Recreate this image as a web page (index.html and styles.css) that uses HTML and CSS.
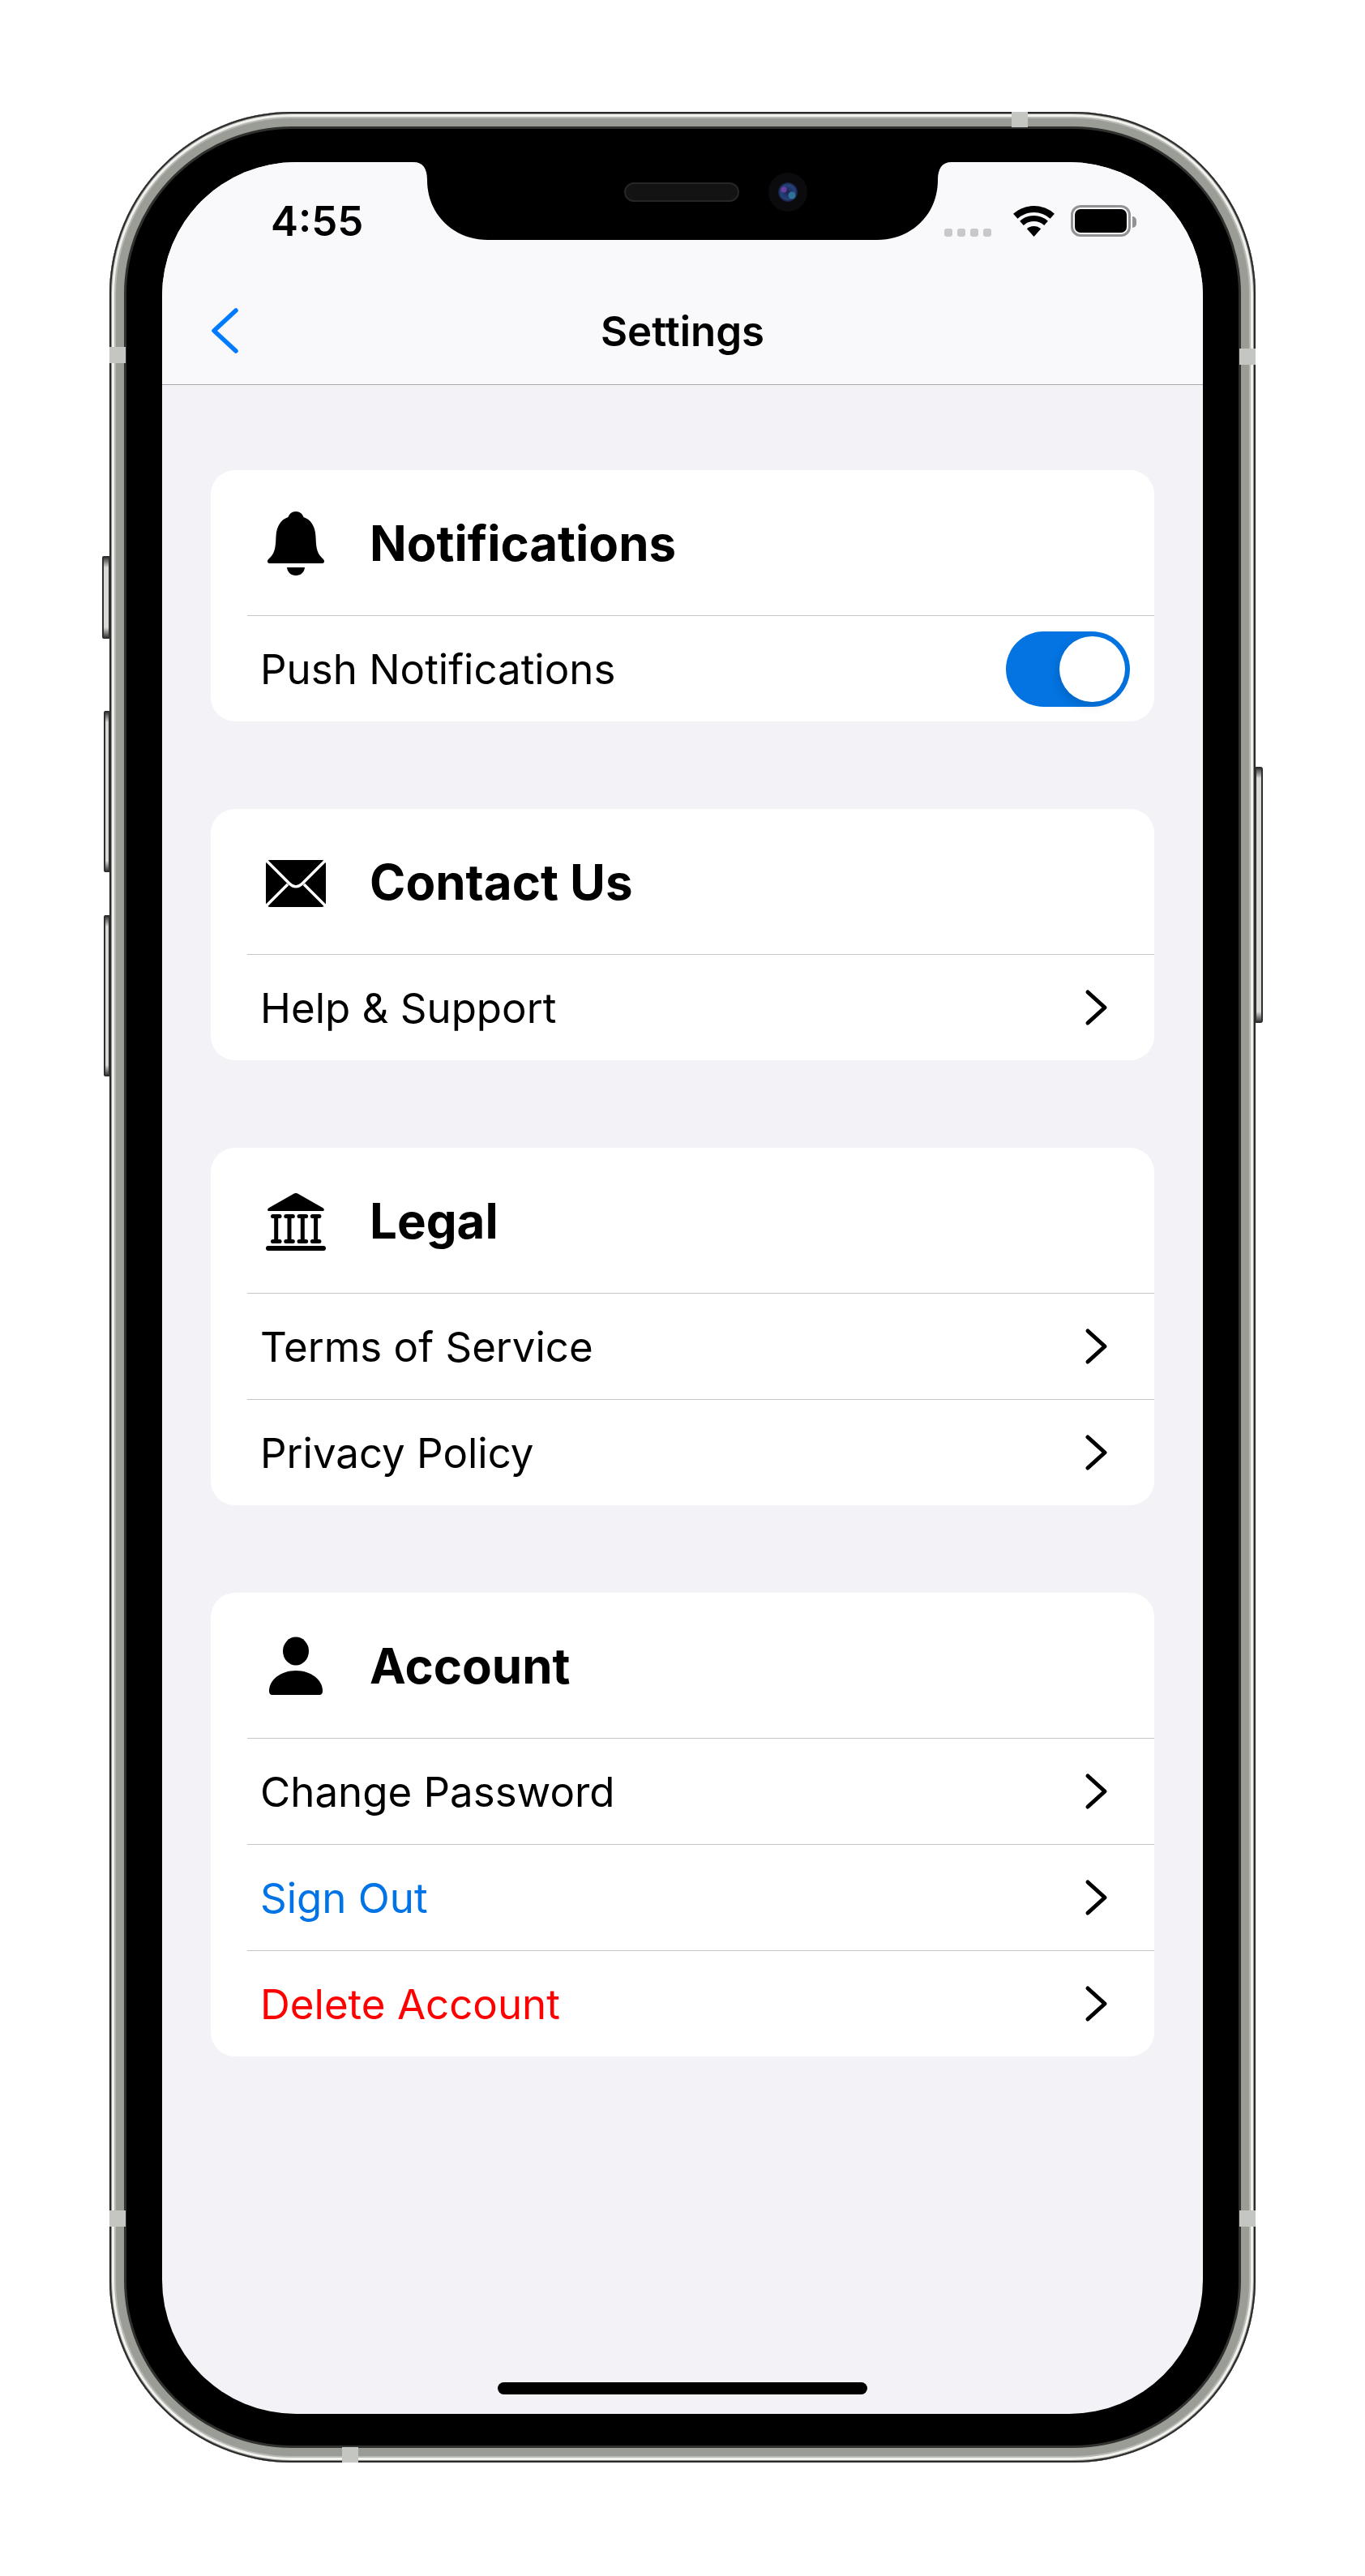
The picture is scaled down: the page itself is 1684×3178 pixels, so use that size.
FILE: index.html
```html
<!DOCTYPE html>
<html lang="en">
<head>
  <meta charset="UTF-8">
  <title>Settings</title>
  <link rel="stylesheet" href="styles.css">
</head>
<body>
  <div class="phone">
    <!-- side buttons and antenna bands sit on the frame -->
    <span class="side-btn mute"></span>
    <span class="side-btn vol-up"></span>
    <span class="side-btn vol-down"></span>
    <span class="side-btn power"></span>
    <span class="band band-top"></span>
    <span class="band band-bottom"></span>
    <span class="band band-lt"></span>
    <span class="band band-rt"></span>
    <span class="band band-lb"></span>
    <span class="band band-rb"></span>

    <div class="screen">
      <svg class="notch" width="664" height="96" viewBox="0 0 664 96">
        <defs>
          <radialGradient id="lens" cx="50%" cy="50%" r="50%">
            <stop offset="0%" stop-color="#1a2550"/>
            <stop offset="75%" stop-color="#27427c"/>
            <stop offset="100%" stop-color="#141c36"/>
          </radialGradient>
        </defs>
        <path d="M0 0C12 0 17 8 17 22C17 65 50 96 92 96H572C614 96 647 65 647 22C647 8 652 0 664 0Z" fill="#000"/>
        <rect x="261" y="26" width="140" height="22" rx="11" fill="#131313" stroke="#262626" stroke-width="2"/>
        <circle cx="462" cy="37" r="24" fill="#0b0b0e"/>
        <circle cx="462" cy="37" r="12" fill="url(#lens)"/>
        <circle cx="457" cy="34" r="3.5" fill="#6b3fa0"/>
        <circle cx="467" cy="41" r="4.5" fill="#2f7199"/>
      </svg>

      <div class="nav">
        <div class="status">
          <span class="time">4:55</span>
          <div class="status-right">
            <div class="dots"><i></i><i></i><i></i><i></i></div>
            <svg class="wifi" width="51" height="38" viewBox="0 0 51 38">
              <path d="M2.75 12.73A34 34 0 0 1 48.25 12.73" fill="none" stroke="#000" stroke-width="8"/>
              <path d="M10.45 21.3A22.5 22.5 0 0 1 40.55 21.3" fill="none" stroke="#000" stroke-width="7"/>
              <path d="M25.5 38L16.8 28.3A13 13 0 0 1 34.2 28.3Z" fill="#000"/>
            </svg>
            <div class="battery"><div class="battery-fill"></div></div>
            <span class="battery-nub"></span>
          </div>
        </div>
        <div class="title-row">
          <svg class="back" width="36" height="58" viewBox="0 0 36 58">
            <path d="M31 4L4 29L31 54" fill="none" stroke="#007aff" stroke-width="5.5" stroke-linecap="round" stroke-linejoin="round"/>
          </svg>
          <div class="title">Settings</div>
        </div>
      </div>

      <div class="content">
        <section class="card">
          <div class="card-head">
            <svg class="icon" width="90" height="90" viewBox="0 0 90 90">
              <path d="M45 6C50 6 53 9 54.5 13C64 16 69 25 69.5 37C70 49 70.5 56 76 62C79 65 80.5 66 80 68C79.5 70 78 70 76 70H14C12 70 10.5 70 10 68C9.500 66 11 65 14 62C19.500 56 20 49 20.500 37C21 25 26 16 35.500 13C37 9 40 6 45 6Z"/>
              <path d="M34 75H56C55.500 81 51 85 45 85C39 85 34.500 81 34 75Z"/>
            </svg>
            <h2>Notifications</h2>
          </div>
          <div class="row">
            <span>Push Notifications</span>
            <div class="toggle"><div class="knob"></div></div>
          </div>
        </section>

        <section class="card">
          <div class="card-head">
            <svg class="icon" width="90" height="90" viewBox="0 0 90 90">
              <rect x="8" y="18" width="74" height="58" rx="5"/>
              <path d="M9 19L37 47C42 52 48 52 53 47L81 19M8 75L35 48M82 75L55 48" fill="none" stroke="#fff" stroke-width="3.500"/>
            </svg>
            <h2>Contact Us</h2>
          </div>
          <div class="row">
            <span>Help &amp; Support</span>
            <svg class="chevron" width="30" height="46" viewBox="0 0 30 46"><path d="M4 4L25 23L4 42"/></svg>
          </div>
        </section>

        <section class="card">
          <div class="card-head">
            <svg class="icon" width="90" height="90" viewBox="0 0 90 90">
              <path d="M45 11C46.500 11 47.500 11.500 49 12.500L78 29C81 31 80 33 78 33H12C10 33 9 31 12 29L41 12.500C42.500 11.500 43.500 11 45 11Z"/>
              <g class="columns">
                <rect x="14" y="37" width="13.500" height="5" rx="2.500"/>
                <rect x="30.300" y="37" width="13.500" height="5" rx="2.500"/>
                <rect x="46.600" y="37" width="13.500" height="5" rx="2.500"/>
                <rect x="62.900" y="37" width="13.500" height="5" rx="2.500"/>
                <rect x="18.200" y="40" width="5" height="30"/>
                <rect x="34.500" y="40" width="5" height="30"/>
                <rect x="50.800" y="40" width="5" height="30"/>
                <rect x="67.100" y="40" width="5" height="30"/>
                <rect x="14" y="68" width="13.500" height="5" rx="2.500"/>
                <rect x="30.300" y="68" width="13.500" height="5" rx="2.500"/>
                <rect x="46.600" y="68" width="13.500" height="5" rx="2.500"/>
                <rect x="62.900" y="68" width="13.500" height="5" rx="2.500"/>
              </g>
              <rect x="8" y="76" width="74" height="6" rx="3"/>
            </svg>
            <h2>Legal</h2>
          </div>
          <div class="row">
            <span>Terms of Service</span>
            <svg class="chevron" width="30" height="46" viewBox="0 0 30 46"><path d="M4 4L25 23L4 42"/></svg>
          </div>
          <div class="row">
            <span>Privacy Policy</span>
            <svg class="chevron" width="30" height="46" viewBox="0 0 30 46"><path d="M4 4L25 23L4 42"/></svg>
          </div>
        </section>

        <section class="card">
          <div class="card-head">
            <svg class="icon" width="90" height="90" viewBox="0 0 90 90">
              <ellipse cx="45" cy="27" rx="16" ry="17.500"/>
              <path d="M12 76C12 62 27 51 45 51C63 51 78 62 78 76C78 80 76 81 74 81H16C14 81 12 80 12 76Z"/>
            </svg>
            <h2>Account</h2>
          </div>
          <div class="row">
            <span>Change Password</span>
            <svg class="chevron" width="30" height="46" viewBox="0 0 30 46"><path d="M4 4L25 23L4 42"/></svg>
          </div>
          <div class="row">
            <span class="blue">Sign Out</span>
            <svg class="chevron" width="30" height="46" viewBox="0 0 30 46"><path d="M4 4L25 23L4 42"/></svg>
          </div>
          <div class="row">
            <span class="red">Delete Account</span>
            <svg class="chevron" width="30" height="46" viewBox="0 0 30 46"><path d="M4 4L25 23L4 42"/></svg>
          </div>
        </section>
      </div>

      <div class="home-bar"></div>
    </div>
  </div>
</body>
</html>
```
FILE: styles.css
```css
* {
  box-sizing: border-box;
}
body {
  margin: 0;
  padding: 138px 0 0 135px;
  background-color: #fff;
  font-family: Inter, "Liberation Sans", sans-serif;
  color: #000;
}
.phone {
  position: relative;
  width: 1414px;
  height: 2900px;
  padding: 62px 65px 60px;
  border-radius: 225px;
  background-color: #000;
  box-shadow:
    inset 0 0 0 2px #2a2a2a,
    inset 0 0 0 3px #8f908c,
    inset 0 0 0 6px #f1f1ee,
    inset 0 0 0 8px #b9bab6,
    inset 0 0 0 18px #9a9c96,
    inset 0 0 0 21px #30302f;
}

/* frame details */
.side-btn {
  position: absolute;
  width: 8px;
  border: 2px solid #2f2f2f;
  border-radius: 2px 0 0 2px;
  background: linear-gradient(to bottom, #3c3c3c 0, #d9dad5 12px, #d9dad5 calc(100% - 12px), #3c3c3c 100%);
}
.mute {
  left: -9px;
  top: 548px;
  width: 10px;
  height: 102px;
}
.vol-up {
  left: -7px;
  top: 739px;
  height: 199px;
}
.vol-down {
  left: -7px;
  top: 991px;
  height: 199px;
}
.power {
  right: -9px;
  top: 808px;
  width: 10px;
  height: 316px;
  border-radius: 0 3px 3px 0;
}
.band {
  position: absolute;
  background-color: #c4c6c2;
}
.band-top {
  left: 1113px;
  top: 0;
  width: 20px;
  height: 19px;
}
.band-bottom {
  left: 287px;
  bottom: 0;
  width: 20px;
  height: 19px;
}
.band-lt,
.band-lb,
.band-rt,
.band-rb {
  width: 20px;
  height: 20px;
}
.band-lt {
  left: 0;
  top: 290px;
}
.band-rt {
  right: 0;
  top: 292px;
}
.band-lb {
  left: 0;
  top: 2589px;
}
.band-rb {
  right: 0;
  top: 2589px;
}

/* screen */
.screen {
  position: relative;
  display: flex;
  flex-direction: column;
  width: 1284px;
  height: 2778px;
  border-radius: 165px;
  overflow: hidden;
  background-color: #f2f2f7;
}
.notch {
  position: absolute;
  left: 310px;
  top: 0;
}
.nav {
  height: 275px;
  border-bottom: 1px solid #a9a9ab;
  background-color: #f9f9fc;
}
.status {
  display: flex;
  justify-content: space-between;
  height: 142px;
  padding: 47px 82px 0 134px;
}
.time {
  font-size: 51px;
  font-weight: 600;
  line-height: 51px;
}
.status-right {
  display: flex;
  align-items: flex-start;
  height: 46px;
  padding-top: 7px;
}
.dots {
  display: flex;
  gap: 6px;
  margin: 28px 27px 0 0;
}
.dots i {
  width: 10px;
  height: 10px;
  border-radius: 3px;
  background-color: #c7c7cc;
}
.wifi {
  margin-right: 20px;
}
.battery {
  width: 74px;
  height: 39px;
  padding: 2px;
  border: 3px solid #929296;
  border-radius: 12px;
  margin-top: -1px;
}
.battery-fill {
  height: 100%;
  border-radius: 7px;
  background-color: #000;
}
.battery-nub {
  width: 5px;
  height: 14px;
  margin: 13px 0 0 2px;
  border-radius: 0 7px 7px 0;
  background-color: #929296;
}
.title-row {
  display: grid;
  grid-template-columns: 1fr auto 1fr;
  align-items: center;
  height: 132px;
  padding-left: 60px;
  padding-right: 60px;
}
.back {
  display: block;
}
.title {
  font-size: 51px;
  font-weight: 600;
}

/* cards */
.content {
  display: flex;
  flex-direction: column;
  gap: 108px;
  padding: 105px 60px 0;
}
.card {
  border-radius: 30px;
  background-color: #fff;
}
.card-head {
  display: flex;
  align-items: center;
  gap: 46px;
  height: 179px;
  padding-left: 60px;
}
.icon {
  display: block;
  fill: #000;
}
.card-head h2 {
  margin: 0;
  font-size: 60px;
  font-weight: 700;
}
.row {
  display: flex;
  align-items: center;
  justify-content: space-between;
  height: 131px;
  margin-left: 45px;
  padding: 0 56px 0 16px;
  border-top: 1px solid #c6c6c8;
  font-size: 51px;
}
.blue {
  color: #0073e6;
}
.red {
  color: #ff0000;
}
.chevron {
  display: block;
  fill: none;
  stroke: #000;
  stroke-width: 5;
  stroke-linecap: round;
  stroke-linejoin: round;
}
.toggle {
  display: flex;
  justify-content: flex-end;
  width: 153px;
  height: 93px;
  margin-right: -26px;
  padding: 6px;
  border-radius: 47px;
  background-color: #0374e2;
}
.knob {
  width: 81px;
  height: 81px;
  border-radius: 50%;
  background-color: #fff;
  box-shadow: -3px 5px 12px rgba(0, 0, 0, 0.12);
}
.home-bar {
  position: absolute;
  left: 414px;
  bottom: 24px;
  width: 456px;
  height: 15px;
  border-radius: 8px;
  background-color: #000;
}
```
